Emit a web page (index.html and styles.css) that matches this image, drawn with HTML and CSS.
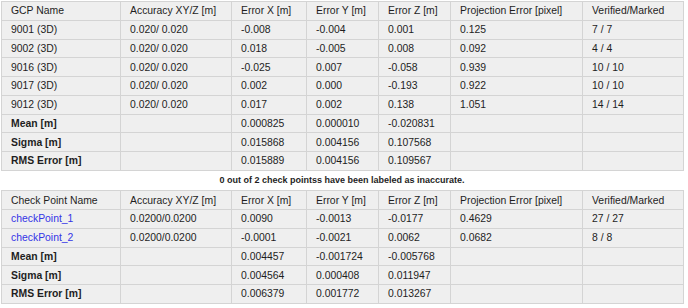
FILE: index.html
```html
<!DOCTYPE html>
<html>
<head>
<meta charset="utf-8">
<link rel="stylesheet" href="styles.css">
</head>
<body>
<div class="page">
  <table class="grid">
    <colgroup>
      <col class="c1"><col class="c2"><col class="c3"><col class="c4"><col class="c5"><col class="c6"><col class="c7">
    </colgroup>
    <tr><td>GCP Name</td><td>Accuracy XY/Z [m]</td><td>Error X [m]</td><td>Error Y [m]</td><td>Error Z [m]</td><td>Projection Error [pixel]</td><td>Verified/Marked</td></tr>
    <tr><td>9001 (3D)</td><td>0.020/ 0.020</td><td>-0.008</td><td>-0.004</td><td>0.001</td><td>0.125</td><td>7 / 7</td></tr>
    <tr><td>9002 (3D)</td><td>0.020/ 0.020</td><td>0.018</td><td>-0.005</td><td>0.008</td><td>0.092</td><td>4 / 4</td></tr>
    <tr><td>9016 (3D)</td><td>0.020/ 0.020</td><td>-0.025</td><td>0.007</td><td>-0.058</td><td>0.939</td><td>10 / 10</td></tr>
    <tr><td>9017 (3D)</td><td>0.020/ 0.020</td><td>0.002</td><td>0.000</td><td>-0.193</td><td>0.922</td><td>10 / 10</td></tr>
    <tr><td>9012 (3D)</td><td>0.020/ 0.020</td><td>0.017</td><td>0.002</td><td>0.138</td><td>1.051</td><td>14 / 14</td></tr>
    <tr><td class="b">Mean [m]</td><td></td><td>0.000825</td><td>0.000010</td><td>-0.020831</td><td></td><td></td></tr>
    <tr><td class="b">Sigma [m]</td><td></td><td>0.015868</td><td>0.004156</td><td>0.107568</td><td></td><td></td></tr>
    <tr><td class="b">RMS Error [m]</td><td></td><td>0.015889</td><td>0.004156</td><td>0.109567</td><td></td><td></td></tr>
  </table>
  <div class="note">0 out of 2 check pointss have been labeled as inaccurate.</div>
  <table class="grid">
    <colgroup>
      <col class="c1"><col class="c2"><col class="c3"><col class="c4"><col class="c5"><col class="c6"><col class="c7">
    </colgroup>
    <tr><td>Check Point Name</td><td>Accuracy XY/Z [m]</td><td>Error X [m]</td><td>Error Y [m]</td><td>Error Z [m]</td><td>Projection Error [pixel]</td><td>Verified/Marked</td></tr>
    <tr><td><a class="link" href="#">checkPoint_1</a></td><td>0.0200/0.0200</td><td>0.0090</td><td>-0.0013</td><td>-0.0177</td><td>0.4629</td><td>27 / 27</td></tr>
    <tr><td><a class="link" href="#">checkPoint_2</a></td><td>0.0200/0.0200</td><td>-0.0001</td><td>-0.0021</td><td>0.0062</td><td>0.0682</td><td>8 / 8</td></tr>
    <tr><td class="b">Mean [m]</td><td></td><td>0.004457</td><td>-0.001724</td><td>-0.005768</td><td></td><td></td></tr>
    <tr><td class="b">Sigma [m]</td><td></td><td>0.004564</td><td>0.000408</td><td>0.011947</td><td></td><td></td></tr>
    <tr><td class="b">RMS Error [m]</td><td></td><td>0.006379</td><td>0.001772</td><td>0.013267</td><td></td><td></td></tr>
  </table>
</div>
</body>
</html>
```
FILE: styles.css
```css
html, body {
  margin: 0;
  padding: 0;
  background: #ffffff;
}
.page {
  padding: 1px 0 0 1px;
  font-family: "Liberation Sans", Arial, sans-serif;
  font-size: 10.4px;
  color: #1e1e1e;
}
.grid {
  table-layout: fixed;
  width: 682px;
  border-collapse: collapse;
  border: 1px solid #d4d4d4;
}
.c1 { width: 119px; }
.c2 { width: 111px; }
.c3 { width: 75px; }
.c4 { width: 72px; }
.c5 { width: 72px; }
.c6 { width: 132px; }
.c7 { width: 101px; }
.grid td {
  background: #efefef;
  border: 1px solid #d4d4d4;
  height: 17.75px;
  padding: 0 0 0 9px;
  white-space: nowrap;
  overflow: hidden;
}
.grid td.b {
  font-weight: bold;
}
.link {
  color: #3434e6;
  text-decoration: none;
}
.note {
  height: 19.5px;
  line-height: 19.5px;
  width: 682px;
  text-align: center;
  font-weight: bold;
  font-size: 9px;
}
```
